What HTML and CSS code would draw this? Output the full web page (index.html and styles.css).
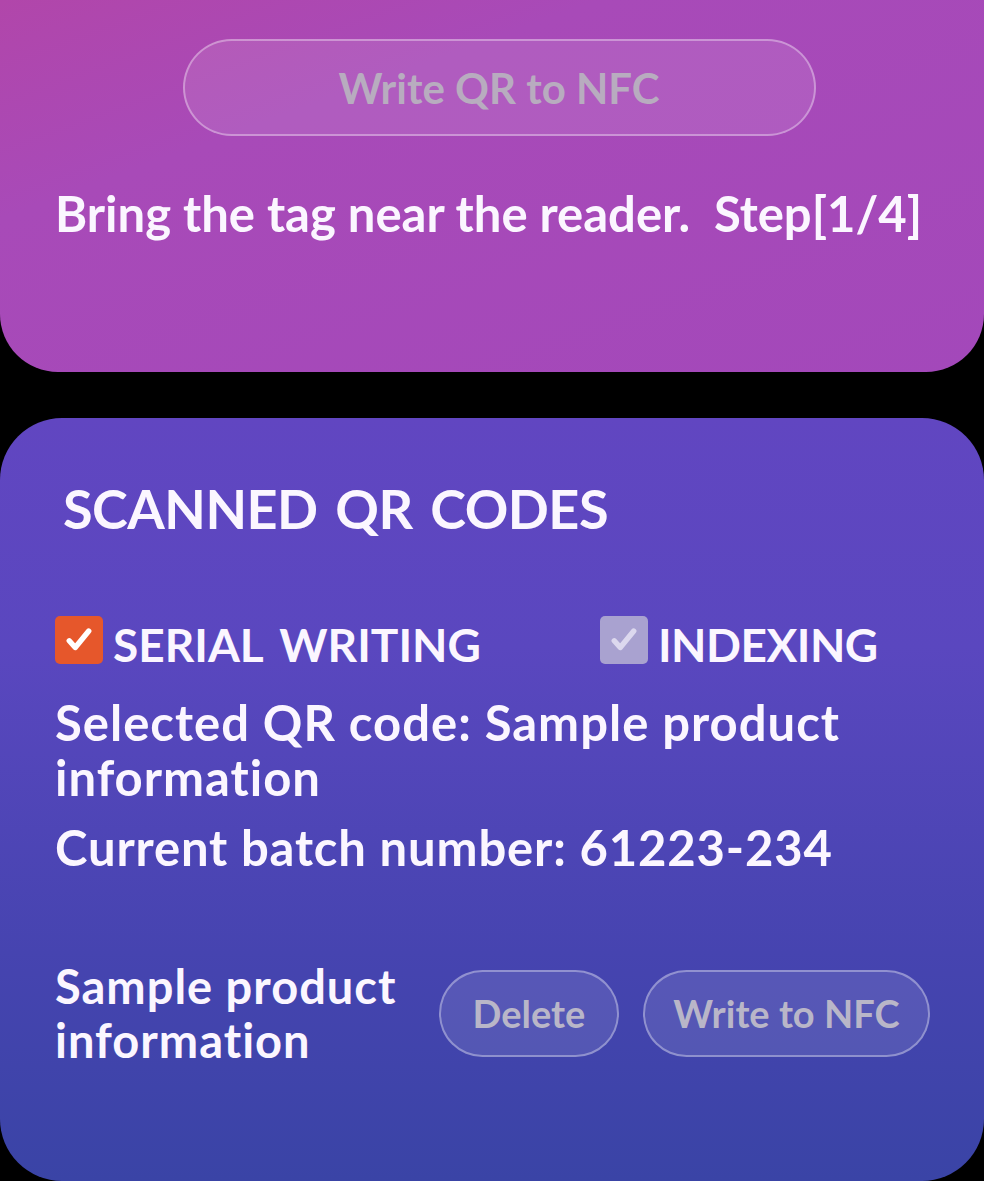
FILE: index.html
```html
<!DOCTYPE html>
<html>
<head>
<meta charset="utf-8">
<link rel="stylesheet" href="styles.css">
</head>
<body>
<section class="card card-top">
  <button class="pill pill-wide">Write QR to NFC</button>
  <p class="hint">Bring the tag near the reader.&nbsp; Step[1/4]</p>
</section>
<section class="card card-codes">
  <h2 class="title">SCANNED QR CODES</h2>
  <div class="options">
    <label class="opt opt-serial"><span class="box box-on"><svg viewBox="0 0 24 24"><path d="M5.5 12.5l4 4.5L18.5 6" /></svg></span><span class="opt-text">SERIAL WRITING</span></label>
    <label class="opt opt-index"><span class="box box-off"><svg viewBox="0 0 24 24"><path d="M5.5 12.5l4 4.5L18.5 6" /></svg></span><span class="opt-text">INDEXING</span></label>
  </div>
  <p class="info">Selected QR code: Sample product information</p>
  <p class="info info-batch">Current batch number: 61223-234</p>
  <div class="row">
    <p class="item">Sample product information</p>
    <button class="pill pill-small">Delete</button>
    <button class="pill pill-mid">Write to NFC</button>
  </div>
</section>
</body>
</html>
```
FILE: styles.css
```css
html, body {
  margin: 0;
  padding: 0;
  background: #000;
}
body {
  width: 984px;
  height: 1181px;
  overflow: hidden;
  font-family: "Lato", "Open Sans", sans-serif;
  color: #fbf6ff;
}
.card {
  box-sizing: border-box;
  width: 984px;
}
.card-top {
  height: 372px;
  border-radius: 0 0 58px 58px;
  background: linear-gradient(160deg, #b146aa 0%, #a84ab8 30%, #a348ba 100%);
  padding-top: 39px;
  display: flex;
  flex-direction: column;
  align-items: center;
}
.pill {
  font-family: inherit;
  font-weight: 700;
  color: #b9b6c8;
  background: rgba(255,255,255,0.1);
  border: 2px solid rgba(255,255,255,0.35);
  border-radius: 999px;
  padding: 0;
  box-sizing: border-box;
}
.pill-wide {
  width: 633px;
  height: 97px;
  font-size: 42px;
  color: #b8acbf;
  margin-left: 14px;
}
.hint {
  margin: 49px 0 0 0;
  align-self: flex-start;
  padding-left: 55px;
  font-size: 49px;
  font-weight: 700;
  line-height: 56px;
  letter-spacing: 0;
}
.card-codes {
  margin-top: 46px;
  height: 763px;
  border-radius: 62px;
  background: linear-gradient(180deg, #6146c1 0%, #5a47bf 30%, #4644b0 70%, #3a44a6 100%);
  padding: 56px 0 0 55px;
}
.title {
  margin: 0 0 0 8px;
  font-size: 54px;
  font-weight: 700;
  line-height: 70px;
  letter-spacing: -0.5px;
  word-spacing: 5px;
}
.options {
  display: flex;
  margin-top: 72px;
  height: 48px;
}
.opt {
  display: flex;
  align-items: flex-start;
  font-size: 46px;
  font-weight: 700;
}
.opt-text {
  display: block;
  margin-top: 5px;
  line-height: 48px;
}
.opt-serial .opt-text {
  word-spacing: 6px;
}
.opt-index {
  margin-left: 119px;
}
.opt-index .opt-text {
  letter-spacing: -0.5px;
}
.box {
  width: 48px;
  height: 48px;
  border-radius: 5px;
  margin-right: 10px;
  display: flex;
  align-items: center;
  justify-content: center;
}
.box svg {
  width: 36px;
  height: 36px;
  fill: none;
  stroke: #fff;
  stroke-width: 3.6;
  stroke-linecap: round;
  stroke-linejoin: round;
}
.box-on { background: #e6572b; }
.box-off { background: #a9a2d0; }
.box-off svg { stroke: #dcd8ee; }
.info {
  margin: 31px 0 0 0;
  width: 840px;
  font-size: 49px;
  font-weight: 700;
  line-height: 55px;
  letter-spacing: 1px;
}
.info-batch {
  margin-top: 15px;
  letter-spacing: 0.85px;
}
.row {
  display: flex;
  align-items: center;
  margin-top: 84px;
}
.item {
  margin: 0;
  width: 360px;
  font-size: 47px;
  font-weight: 700;
  line-height: 54px;
  letter-spacing: 1px;
}
.pill-small {
  margin-left: 24px;
  width: 180px;
  height: 87px;
  font-size: 38px;
}
.pill-mid {
  margin-left: 24px;
  width: 287px;
  height: 87px;
  font-size: 38px;
}
```
